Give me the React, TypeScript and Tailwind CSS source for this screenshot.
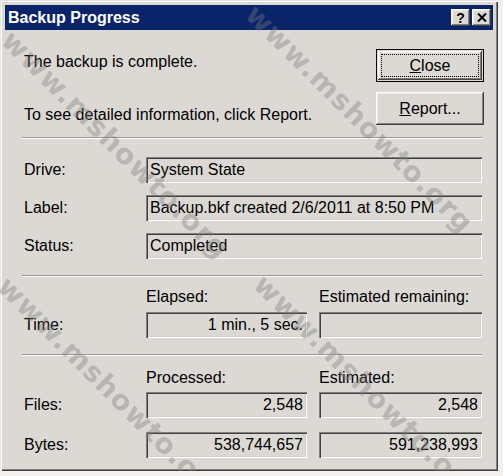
import React from 'react';

const raised =
  'bg-[#dcd9d4] shadow-[inset_-1px_-1px_0_#404040,inset_1px_1px_0_#ffffff,inset_-2px_-2px_0_#808080,inset_2px_2px_0_#ecebe8]';
const sunken =
  'h-[26px] flex items-center px-[4px] bg-[#dcd9d4] shadow-[inset_1px_1px_0_#808080,inset_2px_2px_0_#404040,inset_-1px_-1px_0_#ffffff,inset_-2px_-2px_0_#d4d0c8]';

const Separator = () => (
  <div className="ml-[-2px] w-[460px] h-[2px] border-t border-[#9a9792] border-b border-b-white" />
);

const Field = ({ value, width, right }: { value?: string; width: string; right?: boolean }) => (
  <div className={`${sunken} ${width} ${right ? 'justify-end' : ''}`}>
    <span className="whitespace-nowrap">{value}</span>
  </div>
);

const TitleBar = () => (
  <div className="h-[25px] w-[488px] bg-[#0a246a] flex items-center pl-[3px] pr-[2px]">
    <span className="text-white font-bold text-[16px] leading-none">Backup Progress</span>
    <div className="ml-auto flex gap-[2px]">
      <div className={`${raised} w-[19px] h-[17px] flex items-center justify-center font-bold text-[14px] leading-none`}>
        ?
      </div>
      <div className={`${raised} w-[19px] h-[17px] flex items-center justify-center`}>
        <svg width="10" height="9" viewBox="0 0 10 9">
          <path d="M1 0.5 L9 8.5 M9 0.5 L1 8.5" stroke="#000" strokeWidth="2" />
        </svg>
      </div>
    </div>
  </div>
);

const marks = [
  { left: 'left-[16px]', top: 'top-[26px]' },
  { left: 'left-[260px]', top: 'top-[0px]' },
  { left: 'left-[12px]', top: 'top-[272px]' },
  { left: 'left-[268px]', top: 'top-[270px]' },
];

export default function App() {
  return (
    <div className="w-[503px] h-[476px] bg-[#f1f0ee] font-['Liberation_Sans',Arial,sans-serif] text-black text-[16px] leading-[18px]">
      <div className="relative w-[498px] h-[471px] overflow-hidden bg-[#dcd9d4] p-[5px] shadow-[inset_1px_1px_0_#e6e4e0,inset_2px_2px_0_#ffffff,inset_-1px_-1px_0_#404040,inset_-2px_-2px_0_#808080]">
        <TitleBar />

        <div className="pl-[19px] pr-[9px]">
          <div className="flex">
            <div className="flex-1 pt-[23px]">
              <p>The backup is complete.</p>
              <p className="mt-[35px]">To see detailed information, click Report.</p>
            </div>
            <div className="flex flex-col pt-[19px] gap-[10px]">
              <button className="w-[108px] h-[33px] border border-black bg-[#dcd9d4] p-[1px]">
                <div className={`${raised} w-full h-full p-[3px]`}>
                  <div className="w-full h-full border border-dotted border-black flex items-center justify-center">
                    <span><span className="underline">C</span>lose</span>
                  </div>
                </div>
              </button>
              <button className={`${raised} w-[108px] h-[33px] flex items-center justify-center`}>
                <span><span className="underline">R</span>eport...</span>
              </button>
            </div>
          </div>

          <div className="mt-[12px]">
            <Separator />
          </div>

          <div className="mt-[18px] flex flex-col gap-[12px]">
            <div className="flex items-center">
              <span className="w-[122px]">Drive:</span>
              <Field value="System State" width="w-[336px]" />
            </div>
            <div className="flex items-center">
              <span className="w-[122px]">Label:</span>
              <Field value="Backup.bkf created 2/6/2011 at 8:50 PM" width="w-[336px]" />
            </div>
            <div className="flex items-center">
              <span className="w-[122px]">Status:</span>
              <Field value="Completed" width="w-[336px]" />
            </div>
          </div>

          <div className="mt-[16px]">
            <Separator />
          </div>

          <div className="mt-[11px] flex">
            <span className="w-[122px]" />
            <span className="w-[173px]">Elapsed:</span>
            <span>Estimated remaining:</span>
          </div>
          <div className="mt-[6px] flex items-center">
            <span className="w-[122px]">Time:</span>
            <Field value="1 min., 5 sec." width="w-[161px]" right />
            <div className="ml-[12px]">
              <Field width="w-[163px]" />
            </div>
          </div>

          <div className="mt-[16px]">
            <Separator />
          </div>

          <div className="mt-[13px] flex">
            <span className="w-[122px]" />
            <span className="w-[173px]">Processed:</span>
            <span>Estimated:</span>
          </div>
          <div className="mt-[5px] flex items-center">
            <span className="w-[122px]">Files:</span>
            <Field value="2,548" width="w-[161px]" right />
            <div className="ml-[12px]">
              <Field value="2,548" width="w-[163px]" right />
            </div>
          </div>
          <div className="mt-[14px] flex items-center">
            <span className="w-[122px]">Bytes:</span>
            <Field value="538,744,657" width="w-[161px]" right />
            <div className="ml-[12px]">
              <Field value="591,238,993" width="w-[163px]" right />
            </div>
          </div>
        </div>

        {/* watermark */}
        {marks.map((m, i) => (
          <span
            key={i}
            className={`absolute ${m.left} ${m.top} origin-top-left rotate-[45deg] whitespace-nowrap pointer-events-none font-['DejaVu_Sans',sans-serif] font-bold text-[28px] tracking-[1px] leading-none text-[#7c7c7c]/40`}
          >
            www.mshowto.org
          </span>
        ))}
      </div>
    </div>
  );
}
